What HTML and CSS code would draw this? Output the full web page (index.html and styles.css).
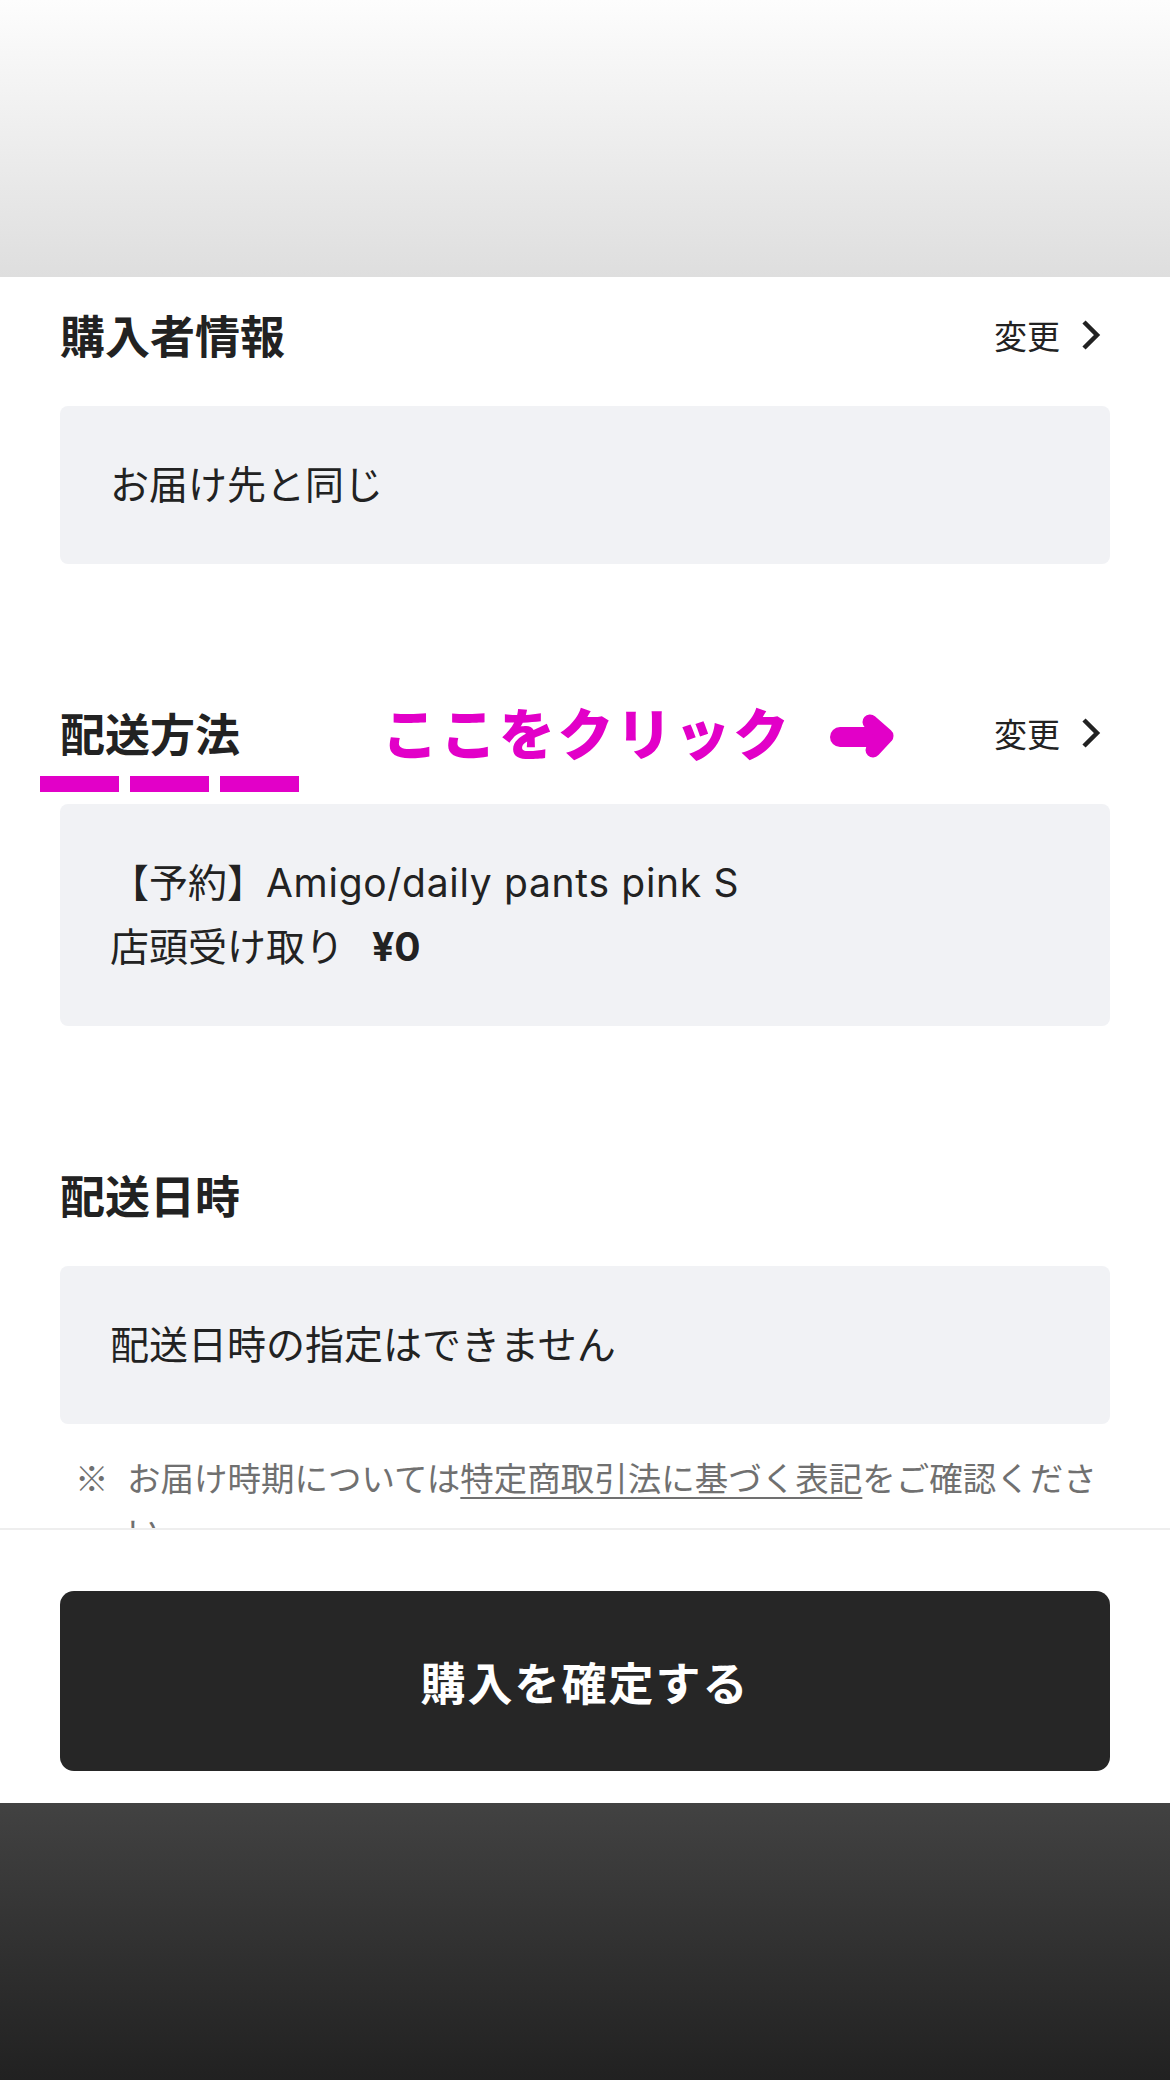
FILE: index.html
```html
<!DOCTYPE html>
<html lang="ja">

<head>
    <meta charset="UTF-8">
    <meta name="viewport" content="width=device-width, initial-scale=1.0">
    <title>購入手続き</title>
    <link rel="stylesheet" href="styles.css">
</head>

<body>
    <div class="top-shade"></div>
    <main class="content">
        <section class="block">
            <div class="block-head">
                <h2>購入者情報</h2>
                <a class="change" href="#">変更<svg class="chev" viewBox="0 0 22 30"><polyline points="4,2 17,15 4,28"/></svg></a>
            </div>
            <div class="panel">お届け先と同じ</div>
        </section>

        <section class="block">
            <div class="block-head">
                <h2>配送方法</h2>
                <!-- 注釈 -->
                <span class="callout">ここをクリック</span>
                <svg class="callout-arrow" viewBox="0 0 66 46">
                    <line x1="10" y1="24" x2="48" y2="24"/>
                    <polyline points="40,9 56,23 43,37"/>
                </svg>
                <div class="dashes"><span></span><span></span><span></span></div>
                <a class="change" href="#">変更<svg class="chev" viewBox="0 0 22 30"><polyline points="4,2 17,15 4,28"/></svg></a>
            </div>
            <div class="panel">
                <p>【予約】<span class="item-name">Amigo/daily pants pink S</span></p>
                <p>店頭受け取り<b class="price">¥0</b></p>
            </div>
        </section>

        <section class="block">
            <div class="block-head">
                <h2>配送日時</h2>
            </div>
            <div class="panel">配送日時の指定はできません</div>
            <p class="note"><span class="mark">※</span><span>お届け時期については<a href="#">特定商取引法に基づく表記</a>をご確認ください。</span></p>
        </section>
    </main>
    <footer class="action-bar">
        <button class="confirm">購入を確定する</button>
    </footer>
    <div class="bottom-shade"></div>
</body>

</html>
```

FILE: styles.css
```css
* {
    margin: 0;
    padding: 0;
    box-sizing: border-box
}

body {
    width: 1170px;
    font-family: Inter, "Noto Sans CJK JP", sans-serif;
    color: #222;
    background: #fff
}

.top-shade {
    height: 277px;
    background: linear-gradient(#fdfdfd, #dedede)
}

.content {
    height: 1251px;
    overflow: hidden;
    padding: 26px 60px 0
}

.block + .block {
    margin-top: 137px
}

.block-head {
    position: relative;
    display: flex;
    align-items: center;
    justify-content: space-between;
    height: 64px;
    margin-bottom: 39px
}

.block-head h2 {
    font-family: "Noto Sans CJK JP", sans-serif;
    font-size: 45px;
    font-weight: 700;
    line-height: 64px
}

.change {
    display: flex;
    align-items: center;
    gap: 20px;
    margin-right: 8px;
    font-family: "Noto Sans CJK JP", sans-serif;
    font-size: 33px;
    color: #222;
    text-decoration: none
}

.chev {
    width: 22px;
    height: 30px;
    fill: none;
    stroke: #222;
    stroke-width: 4.5
}

.callout {
    position: absolute;
    left: 322px;
    top: -2px;
    font-family: "Noto Sans CJK JP", sans-serif;
    font-size: 56px;
    font-weight: 900;
    line-height: 64px;
    letter-spacing: 2.5px;
    color: #e200c8
}

.callout-arrow {
    position: absolute;
    left: 770px;
    top: 12px;
    width: 66px;
    height: 46px;
    fill: none;
    stroke: #e200c8;
    stroke-linecap: round;
    stroke-linejoin: round
}

.callout-arrow line {
    stroke-width: 20
}

.callout-arrow polyline {
    stroke-width: 15
}

.dashes {
    position: absolute;
    left: -20px;
    top: 75px;
    display: flex;
    gap: 11px
}

.dashes span {
    width: 79px;
    height: 16px;
    background: #e200c8
}

.panel {
    background: #f1f2f5;
    border-radius: 8px;
    padding: 47px 50px;
    font-size: 39px;
    line-height: 64px
}

.item-name {
    letter-spacing: 0.7px
}

.price {
    margin-left: 28px;
    font-weight: 700
}

.note {
    display: flex;
    margin-top: 26px;
    padding-left: 15px;
    font-family: "Noto Sans CJK JP", sans-serif;
    font-size: 33.5px;
    line-height: 53px;
    color: #707070
}

.note .mark {
    flex: none;
    width: 52px
}

.note a {
    color: #707070;
    text-decoration: underline;
    text-decoration-thickness: 2px;
    text-underline-offset: 6px
}

.action-bar {
    height: 275px;
    padding: 61px 60px 0;
    border-top: 2px solid #eeeeee;
    background: #fff
}

.confirm {
    display: block;
    width: 100%;
    height: 180px;
    border: none;
    border-radius: 14px;
    background: #262626;
    color: #fff;
    font-family: "Noto Sans CJK JP", sans-serif;
    font-size: 45px;
    font-weight: 700;
    letter-spacing: 2px
}

.bottom-shade {
    height: 277px;
    background: linear-gradient(#424242, #212121)
}
```
